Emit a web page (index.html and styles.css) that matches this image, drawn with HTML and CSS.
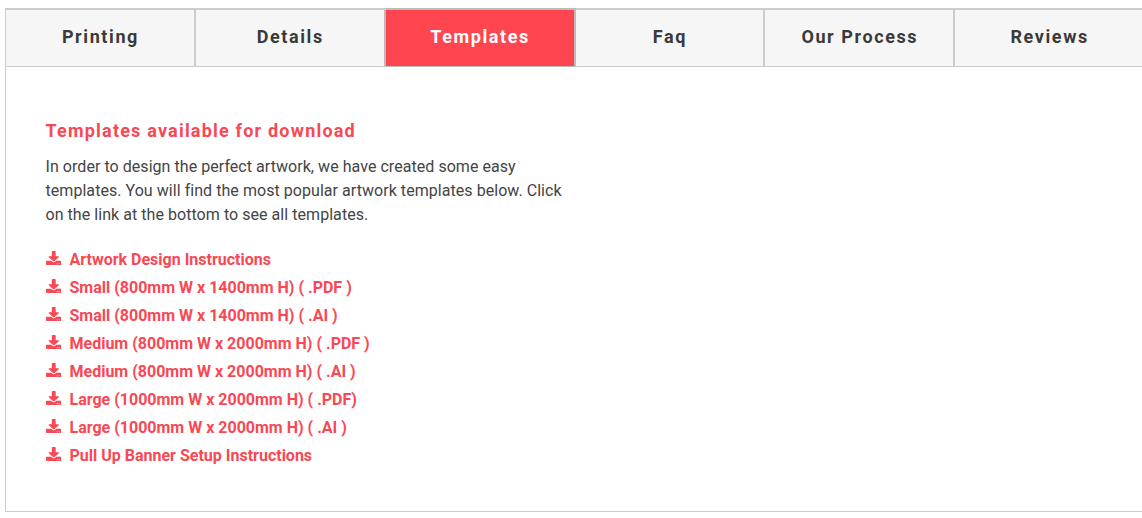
FILE: index.html
```html
<!DOCTYPE html>
<html lang="en">

<head>
  <meta charset="UTF-8">
  <title>Templates</title>
  <link rel="stylesheet" href="styles.css">
</head>

<body>
  <svg class="sprite" width="0" height="0">
    <symbol id="dl" viewBox="0 0 512 512" preserveAspectRatio="none">
      <path d="M216 0h80c13.300 0 24 10.700 24 24v168h87.700c17.800 0 26.700 21.500 14.100 34.100L269.700 378.300c-7.500 7.500-19.800 7.500-27.300 0L90.100 226.100c-12.600-12.600-3.700-34.100 14.100-34.100H192V24c0-13.300 10.700-24 24-24zm296 376v112c0 13.300-10.700 24-24 24H24c-13.300 0-24-10.700-24-24V376c0-13.300 10.700-24 24-24h146.700l49 49c20.100 20.100 52.500 20.100 72.600 0l49-49H488c13.300 0 24 10.700 24 24zm-124 88c0-11-9-20-20-20s-20 9-20 20 9 20 20 20 20-9 20-20zm64 0c0-11-9-20-20-20s-20 9-20 20 9 20 20 20 20-9 20-20z"/>
    </symbol>
  </svg>
  <div class="wrap">
    <ul class="tabs">
      <li>Printing</li>
      <li>Details</li>
      <li class="active">Templates</li>
      <li>Faq</li>
      <li>Our Process</li>
      <li>Reviews</li>
    </ul>
    <div class="panel">
      <h3>Templates available for download</h3>
      <p>In order to design the perfect artwork, we have created some easy templates. You will find the most popular artwork templates below. Click on the link at the bottom to see all templates.</p>
      <ul class="downloads">
        <li><a href="#"><svg class="icon"><use href="#dl"/></svg>Artwork Design Instructions</a></li>
        <li><a href="#"><svg class="icon"><use href="#dl"/></svg>Small (800mm W x 1400mm H) ( .PDF )</a></li>
        <li><a href="#"><svg class="icon"><use href="#dl"/></svg>Small (800mm W x 1400mm H) ( .AI )</a></li>
        <li><a href="#"><svg class="icon"><use href="#dl"/></svg>Medium (800mm W x 2000mm H) ( .PDF )</a></li>
        <li><a href="#"><svg class="icon"><use href="#dl"/></svg>Medium (800mm W x 2000mm H) ( .AI )</a></li>
        <li><a href="#"><svg class="icon"><use href="#dl"/></svg>Large (1000mm W x 2000mm H) ( .PDF)</a></li>
        <li><a href="#"><svg class="icon"><use href="#dl"/></svg>Large (1000mm W x 2000mm H) ( .AI )</a></li>
        <li><a href="#"><svg class="icon"><use href="#dl"/></svg>Pull Up Banner Setup Instructions</a></li>
      </ul>
    </div>
  </div>
</body>

</html>
```

FILE: styles.css
```css
html {
  overflow: hidden;
}

body {
  font-family: Roboto, sans-serif;
  background-color: #fff;
  color: #444;
  margin: 0;
  padding: 8px 0 0 5px;
}

.sprite {
  display: block;
}

.wrap {
  width: 1140px;
  border-left: 1px solid #ccc;
  border-bottom: 1px solid #ccc;
  box-sizing: border-box;
  height: 504px;
}

.tabs {
  display: grid;
  grid-template-columns: repeat(6, 189.85px);
  list-style: none;
  margin: 0;
  padding: 0;
  height: 59px;
  box-sizing: border-box;
  border-top: 2px solid #ccc;
  border-bottom: 1px solid #ccc;
  background-color: #f6f6f6;
}

.tabs li {
  display: flex;
  align-items: center;
  justify-content: center;
  padding: 0 0 3px 1px;
  font-size: 18px;
  font-weight: 700;
  letter-spacing: 1.6px;
  color: #3a3a3a;
  border-right: 2px solid #ccc;
}

.tabs li.active {
  background-color: #ff4650;
  color: #fff;
  border-right-color: #bbb;
  box-shadow: -2px 0 0 #bbb, 0 -2px 0 #bbb, 0 1px 0 #bbb;
}

.panel {
  padding: 52px 40px 0 39.5px;
}

h3 {
  font-size: 18px;
  font-weight: 700;
  letter-spacing: 1.2px;
  line-height: 24px;
  color: #f94853;
  margin: 0 0 12px;
}

p {
  font-size: 16px;
  line-height: 24px;
  letter-spacing: 0.05px;
  width: 525px;
  margin: 0 0 19px;
}

.downloads {
  list-style: none;
  margin: 0;
  padding: 0;
}

.downloads li {
  line-height: 28px;
}

.downloads a {
  display: flex;
  align-items: center;
  font-size: 16px;
  font-weight: 700;
  color: #f94853;
  text-decoration: none;
}

.icon {
  width: 15.5px;
  height: 14px;
  margin-right: 8.5px;
  margin-top: -5px;
  fill: #f94853;
}
```
